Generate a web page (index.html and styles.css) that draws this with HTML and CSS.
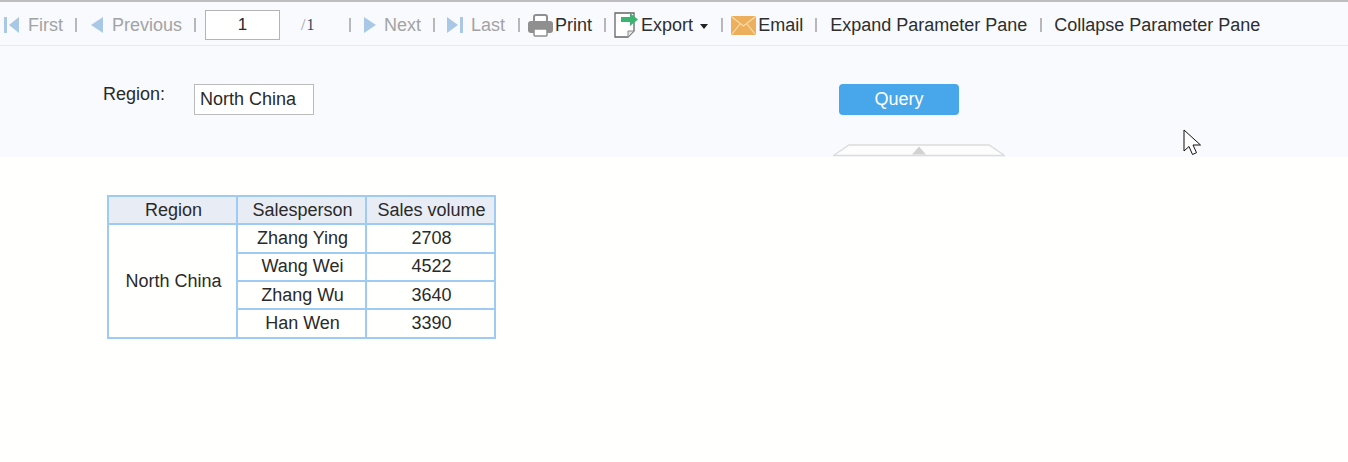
FILE: index.html
```html
<!DOCTYPE html>
<html lang="en">
<head>
<meta charset="utf-8">
<title>Report</title>
<link rel="stylesheet" href="styles.css">
</head>
<body>
<div class="toolbar">
  <span class="tool off first-tool"><svg class="ic" width="20" height="18" viewBox="0 0 20 18"><rect x="0" y="1" width="3" height="16" fill="#a9c8e6"/><path d="M5 9l10-8v16z" fill="#a9c8e6"/></svg><span>First</span></span>
  <i class="sep s1"></i>
  <span class="tool off prev"><svg class="ic" width="15" height="18" viewBox="0 0 15 18"><path d="M1 9l12-8v16z" fill="#a9c8e6"/></svg><span>Previous</span></span>
  <i class="sep s2"></i>
  <span class="pagebox">1</span>
  <span class="total"><span class="slash">/</span>1</span>
  <i class="sep s3"></i>
  <span class="tool off next"><svg class="ic" width="15" height="18" viewBox="0 0 15 18"><path d="M1 1l12 8-12 8z" fill="#a9c8e6"/></svg><span>Next</span></span>
  <i class="sep s4"></i>
  <span class="tool off"><svg class="ic" width="20" height="18" viewBox="0 0 20 18"><path d="M1 1l11 8-11 8z" fill="#a9c8e6"/><rect x="14" y="1" width="3" height="16" fill="#a9c8e6"/></svg><span>Last</span></span>
  <i class="sep s5"></i>
  <span class="tool on print"><svg width="25" height="23" viewBox="0 0 25 23"><path d="M6 8V3a2 2 0 0 1 2-2h9a2 2 0 0 1 2 2v5" fill="#fff" stroke="#8f8f8f" stroke-width="2"/><rect x="0" y="7" width="25" height="12" rx="3" fill="#8f8f8f"/><rect x="6" y="15" width="13" height="7" rx="1" fill="#fff" stroke="#8f8f8f" stroke-width="1.500"/></svg><span>Print</span></span>
  <i class="sep s6"></i>
  <span class="tool on export"><svg width="24" height="26" viewBox="0 0 24 26"><path d="M1 1h19v18l-6 6H1z" fill="#fff" stroke="#666" stroke-width="1.300"/><path d="M14 25v-6h6z" fill="#e6e6e6" stroke="#888"/><path d="M7 5h9V1l8 6.500-8 6.500v-4H7z" fill="#3cb371"/></svg><span>Export</span><i class="caret"></i></span>
  <i class="sep s7"></i>
  <span class="tool on mail"><svg width="25" height="19" viewBox="0 0 25 19"><rect width="25" height="19" rx="1.500" fill="#ecb05c"/><path d="M1 1l11.500 9L24 1M1 18l8-10M24 18l-8-10" fill="none" stroke="#f9dcae" stroke-width="1.200"/></svg><span>Email</span></span>
  <i class="sep s8"></i>
  <span class="tool on">Expand Parameter Pane</span>
  <i class="sep s9"></i>
  <span class="tool on">Collapse Parameter Pane</span>
</div>
<div class="params">
  <div class="param-row">
    <span class="param-label">Region:</span>
    <span class="param-value">North China</span>
    <span class="query">Query</span>
  </div>
  <div class="collapse"><svg width="172" height="13" viewBox="0 0 172 13"><path d="M0.500 11.500L16 1h140l15.500 10.500z" fill="#fdfdfd" stroke="#dcdcdc" stroke-width="1.300"/><path d="M79 10.500l7-8 7 8z" fill="#d2d2d2"/></svg></div>
</div>
<div class="sheet">
  <table class="report">
    <colgroup><col class="c1"><col class="c2"><col class="c3"></colgroup>
    <thead><tr><th>Region</th><th>Salesperson</th><th>Sales volume</th></tr></thead>
    <tbody>
      <tr><td rowspan="4">North China</td><td>Zhang Ying</td><td>2708</td></tr>
      <tr class="thin"><td>Wang Wei</td><td>4522</td></tr>
      <tr><td>Zhang Wu</td><td>3640</td></tr>
      <tr class="thin last"><td>Han Wen</td><td>3390</td></tr>
    </tbody>
  </table>
</div>
<svg class="cursor" width="19" height="28" viewBox="0 0 19 28"><path d="M1 1v21l5-4.500 3.500 8 4-1.800-3.500-7.700h7.500z" fill="#fff" stroke="#111" stroke-width="1"/></svg>
</body>
</html>
```
FILE: styles.css
```css
* { box-sizing: border-box; }
html, body { margin: 0; padding: 0; }
body {
  width: 1348px;
  height: 462px;
  overflow: hidden;
  background: #fffffd;
  font-family: "Liberation Sans", Arial, sans-serif;
  font-size: 18px;
  color: #2a2a2a;
  position: relative;
}
.toolbar {
  height: 46px;
  border-top: 2px solid #bdbdc0;
  border-bottom: 1px solid #e8eaef;
  background: #f8fafe;
  display: flex;
  align-items: center;
  padding: 3px 0 0 4px;
  white-space: nowrap;
}
.tool { display: inline-flex; align-items: center; }
.off { color: #a3a3a3; }
.on { color: #2e2e2e; }
.ic { margin-right: 5px; }
.first-tool .ic { margin-right: 4px; }
.prev .ic { margin-right: 7px; }
.next .ic { margin-right: 6px; }
.sep { width: 2px; height: 14px; background: #b8b8b8; flex: none; }
.s1 { margin: 0 13px 0 12px; }
.s2 { margin: 0 9px 0 12px; }
.s3 { margin: 0 12px 0 0; }
.s4 { margin: 0 11px 0 12px; }
.s5 { margin: 0 8px 0 13px; }
.s6 { margin: 0 8px 0 12px; }
.s7 { margin: 0 8px 0 13px; }
.s8 { margin: 0 13px 0 12px; }
.s9 { margin: 0 12px 0 13px; }
.pagebox {
  width: 75px;
  height: 30px;
  border: 1px solid #b4b4b4;
  background: #fff;
  text-align: center;
  line-height: 28px;
  font-size: 17px;
}
.total {
  width: 69px;
  padding-left: 21px;
  font-family: "Liberation Serif", serif;
  font-size: 16px;
  color: #2f4a5a;
}
.slash { color: #999; margin-right: 1px; }
.print span { margin-left: 2px; }
.export span { margin-left: 3px; }
.caret {
  width: 0; height: 0;
  margin-left: 7px;
  margin-top: 3px;
  border-left: 4.500px solid transparent;
  border-right: 4.500px solid transparent;
  border-top: 5px solid #222;
}
.mail span { margin-left: 2px; }
.params {
  height: 111px;
  background: #f8fafe;
  position: relative;
  overflow: hidden;
}
.param-row { display: flex; padding: 38px 0 0 103px; align-items: flex-start; }
.param-label { width: 91px; line-height: 20px; }
.param-value {
  width: 120px;
  height: 31px;
  border: 1px solid #bbb;
  background: #fff;
  padding-left: 5px;
  line-height: 29px;
}
.query {
  margin-left: 525px;
  width: 120px;
  height: 31px;
  border-radius: 4px;
  background: #47a7ea;
  color: #fff;
  text-align: center;
  line-height: 31px;
}
.collapse { position: absolute; left: 833px; top: 98px; line-height: 0; }
.sheet { padding: 38px 0 0 107px; }
.report { border-collapse: collapse; table-layout: fixed; width: 387px; border: 2px solid #9ecbf3; }
.c1 { width: 129px; }
.c2 { width: 129px; }
.c3 { width: 129px; }
.report th, .report td {
  border: 2px solid #9ecbf3;
  padding: 0 0 0 2px;
  height: 28.300px;
  text-align: center;
  font-weight: normal;
  color: #2a2a2a;
}
.report th { background: #e8ecf5; }
.report .thin td { border-top-width: 1px; }
.report .last td { height: 29px; }
.cursor { position: absolute; left: 1183px; top: 129px; }
```
